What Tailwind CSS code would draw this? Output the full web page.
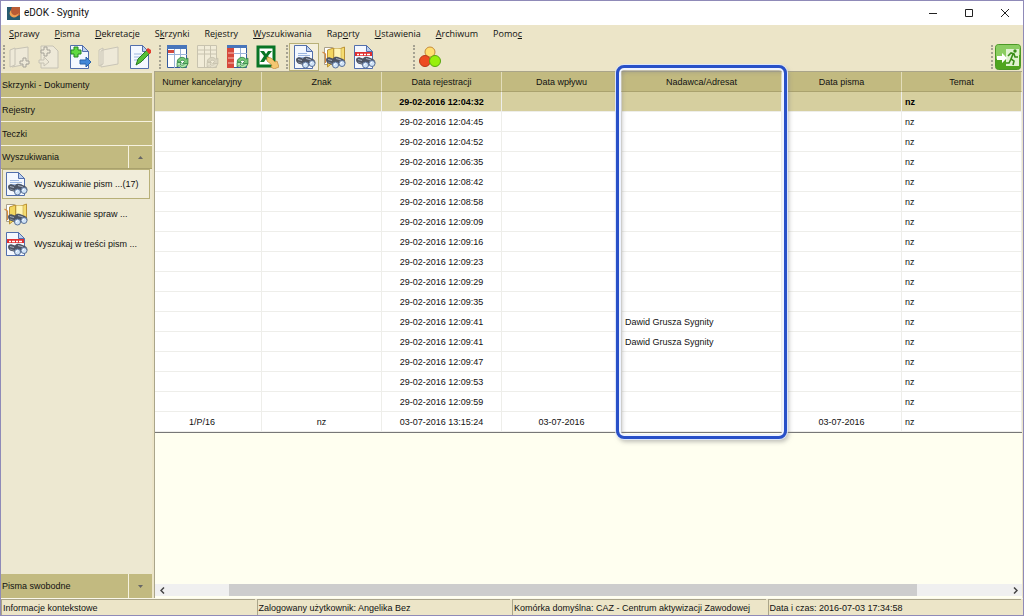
<!DOCTYPE html>
<html lang="pl">
<head>
<meta charset="utf-8">
<title>eDOK - Sygnity</title>
<script src="https://cdn.jsdelivr.net/npm/@tailwindcss/browser@4"></script>
</head>
<body class="flex h-screen flex-col overflow-hidden border border-[#8f8ab8] bg-[#ece5c8] font-['Liberation_Sans',sans-serif] text-[9px] leading-3 whitespace-nowrap text-[#111]">

<svg class="hidden" xmlns="http://www.w3.org/2000/svg">
  <defs>
    <symbol id="page" viewBox="0 0 24 24"><path d="M2.500.5h12l6 6v17h-18z" fill="#f4f8ff" stroke="#526fac"/><path d="M14.500.5v6h6z" fill="#bdd0ee" stroke="#526fac"/></symbol>
    <symbol id="bino" viewBox="0 0 24 24"><path d="M4 15c0-2 2-3 4-2.500l3 1c1-2 3-2 5-1.500l5 2c2 1 3 3 2 5l-9 2-6-2c-2 0-4-2-4-4z" fill="#4c5362"/><path d="M6 14.500l4 1M14 13.500l5 1.500" stroke="#a3acbb" stroke-width="1.200"/><path d="M6 17l4 1.500" stroke="#7d8796"/><circle cx="13.500" cy="20" r="3" fill="#cfe2f7" stroke="#5a7197"/><circle cx="20" cy="18.500" r="3" fill="#cfe2f7" stroke="#5a7197"/><path d="M12 20l1.500-1.500M18.500 18.500L20 17" stroke="#fff"/></symbol>
    <symbol id="doc-find" viewBox="0 0 24 24"><use href="#page"/><path d="M6 8.500h9M6 10.500h12M6 12.500h12" stroke="#9cb6df"/><use href="#bino"/></symbol>
    <symbol id="case-find" viewBox="0 0 24 24"><path d="M2.500 2.500h8v17h-8z" fill="#fff" stroke="#a9a08c"/><path d="M.5 7l3 2v9" fill="none" stroke="#d68a3d" stroke-width="1.200"/><path d="M5.500 5l6-2v14l-6 5z" fill="#f3d65f" stroke="#bc9334"/><path d="M11.500 3.500l3 1.500 8-3v16h-11z" fill="#f5dc70" stroke="#bc9334"/><path d="M12 3.500h7v10h-7z" fill="#fff5b7" stroke="#c4a54a" stroke-width=".6"/><use href="#bino"/></symbol>
    <symbol id="pdf-find" viewBox="0 0 24 24"><use href="#page"/><path d="M3 7h17v4H3z" fill="#e03030"/><path d="M5 9.500h2m1 0h3m1 0h2m1 0h3" stroke="#fff" stroke-width="1.500"/><use href="#bino"/></symbol>
    <symbol id="refresh" viewBox="0 0 12 12"><path d="M1 5c1-4 6-5 8-2l2-1v5H6l2-2C6 3 4 4 4 6z" fill="#78c878" stroke="#2f8745" stroke-width=".8"/><path d="M11 7c-1 4-6 5-8 2l-2 1V6h4L4 8c2 1 4 0 4-1z" fill="#b3e8ad" stroke="#2f8745" stroke-width=".8"/></symbol>
  </defs>
</svg>

<header class="flex h-6 shrink-0 items-center justify-between bg-white pl-1.5">
  <div class="flex items-center gap-1">
    <svg class="size-[13px]" viewBox="0 0 13 13"><rect width="13" height="13" fill="#b95b35"/><path d="M0 0h5c-2 3-1 7 2 9 2 1 4 0 6-1v5H0z" fill="#285c70"/><path d="M4 3c0 5 4 7 8 3-1 5-7 6-9 2-1-2 0-4 1-5z" fill="#f1a052"/></svg>
    <h1 class="font-['Roboto',sans-serif] text-[10px]">eDOK - Sygnity</h1>
  </div>
  <div class="flex">
    <button aria-label="Minimalizuj" class="flex h-6 w-9 items-center justify-center"><svg class="size-[10px]" viewBox="0 0 10 10"><path d="M1 5.500h8" stroke="#222"/></svg></button>
    <button aria-label="Maksymalizuj" class="flex h-6 w-9 items-center justify-center"><svg class="size-[10px]" viewBox="0 0 10 10"><path d="M1.500 1.500h7v7h-7z" fill="none" stroke="#222"/></svg></button>
    <button aria-label="Zamknij" class="flex h-6 w-9 items-center justify-center"><svg class="size-[10px]" viewBox="0 0 10 10"><path d="M1 1l8 8M9 1l-8 8" stroke="#222"/></svg></button>
  </div>
</header>

<nav class="flex h-[18px] shrink-0 items-center gap-[15px] px-2 font-['Open_Sans',sans-serif]">
  <button><u>S</u>prawy</button><button><u>P</u>isma</button><button><u>D</u>ekretacje</button><button>S<u>k</u>rzynki</button><button>Re<u>j</u>estry</button><button><u>W</u>yszukiwania</button><button>Rap<u>o</u>rty</button><button><u>U</u>stawienia</button><button><u>A</u>rchiwum</button><button>Pomo<u>c</u></button>
</nav>

<div class="flex h-7 shrink-0 items-center justify-between">
  <div class="flex items-center">
    <span class="ml-0.5 h-6 w-0 border-l-2 border-dotted border-[#a5a292]"></span>
    <button aria-label="Nowa sprawa" disabled class="flex h-7 w-[30px] items-center justify-center"><svg class="size-6" viewBox="0 0 24 24" fill="#eee9d8" stroke="#c6c2b4"><path d="M2 5l5-2v17l-5 2zM7 4l13-2v17L4 22"/><path d="M15 13h3v3h3v3h-3v3h-3v-3h-3v-3h3z" stroke="#a5a298"/></svg></button>
    <button aria-label="Nowe pismo" disabled class="flex h-7 w-[30px] items-center justify-center"><svg class="size-6" viewBox="0 0 24 24" fill="#eee9d8" stroke="#c6c2b4"><path d="M3 1h12l5 5v17H3z"/><path d="M6 2h3v3h3v3H9v3H6V8H3V5h3z" stroke="#a5a298"/><path d="M1 15h5v-3l5 5-5 4v-3H1z"/></svg></button>
    <button aria-label="Dodaj pismo" class="flex h-7 w-[30px] items-center justify-center"><svg class="size-6" viewBox="0 0 24 24"><use href="#page"/><path d="M6 2h4v3h3v4h-3v3H6V9H3V5h3z" fill="#60da42" stroke="#278424"/><path d="M12 15h6v-3l5 5-5 5v-3h-6z" fill="#4288d8" stroke="#2862a9"/></svg></button>
    <button aria-label="Teczka" disabled class="flex h-7 w-[30px] items-center justify-center"><svg class="size-6" viewBox="0 0 24 24" fill="#eee9d8" stroke="#c9c5b7"><path d="M1 5l4-2v16l-4 2zM5 5l15-3v17L3 22V6z"/></svg></button>
    <button aria-label="Edytuj" class="flex h-7 w-[30px] items-center justify-center"><svg class="size-6" viewBox="0 0 24 24"><use href="#page"/><path d="M6 9h8M6 12h9M6 15h10" stroke="#9cb6df"/><path d="M8 20l2-6 9-9 3 3-9 9z" fill="#55bf37" stroke="#287d25"/><path d="M18 5l2-2 3 2v3l-2 1z" fill="#e33c2e"/></svg></button>
    <span class="ml-1 h-6 w-0 border-l-2 border-dotted border-[#a5a292]"></span>
    <button aria-label="Odśwież listę" class="ml-px flex h-7 w-[30px] items-center justify-center"><svg class="size-6" viewBox="0 0 24 24"><path d="M2.500.5h19v22h-19z" fill="#fff" stroke="#345b9d"/><path d="M2 0h20v4H2z" fill="#4976bb"/><path d="M9.500 4v19M15.500 4v19M3 9.500h19" stroke="#9ab3d8"/><path d="M3 5h6v3H3z" fill="#d34b3f"/><use href="#refresh" x="11" y="11" width="13" height="13"/></svg></button>
    <button aria-label="Odśwież" disabled class="flex h-7 w-[30px] items-center justify-center"><svg class="size-6 opacity-30 grayscale" viewBox="0 0 24 24"><path d="M2.500.5h19v22h-19zM9.500 1v21M15.500 1v21M3 5h18M3 9h18" fill="#fff" stroke="#777"/><use href="#refresh" x="11" y="11" width="13" height="13"/></svg></button>
    <button aria-label="Odśwież rejestr" class="flex h-7 w-[30px] items-center justify-center"><svg class="size-6" viewBox="0 0 24 24"><path d="M2.500.5h19v22h-19z" fill="#fff" stroke="#345b9d"/><path d="M2 0h20v3H2z" fill="#4976bb"/><path d="M2 3h7v20H2z" fill="#d6493c"/><path d="M3 8h6M3 13h6M3 18h6" stroke="#f4c0b5"/><path d="M9 8.500h13M15.500 3v19" stroke="#9ab3d8"/><use href="#refresh" x="11" y="11" width="13" height="13"/></svg></button>
    <button aria-label="Eksport do Excela" class="flex h-7 w-[30px] items-center justify-center"><svg class="size-6" viewBox="0 0 24 24"><path d="M3 2h16v19H3z" fill="#fff" stroke="#087526" stroke-width="3"/><path d="M5 6h4l2 3 2-3h4l-4 5 4 6h-4l-2-3-2 3H5l4-6z" fill="#087526"/><path d="M12 12l4 1 4 4 2-1 2 6-5 2-3-2 1-2-5-4z" fill="#f4c771" stroke="#c4883c" stroke-width=".7"/></svg></button>
    <span class="ml-1 h-6 w-0 border-l-2 border-dotted border-[#a5a292]"></span>
    <button aria-label="Wyszukiwanie pism" class="ml-px flex h-7 w-[30px] items-center justify-center border border-[#b8b078] bg-[#f4efdc]"><svg class="size-6"><use href="#doc-find"/></svg></button>
    <button aria-label="Wyszukiwanie spraw" class="flex h-7 w-[30px] items-center justify-center"><svg class="size-6"><use href="#case-find"/></svg></button>
    <button aria-label="Wyszukaj w treści pism" class="flex h-7 w-[30px] items-center justify-center"><svg class="size-6"><use href="#pdf-find"/></svg></button>
    <span class="ml-[34px] h-6 w-0 border-l-2 border-dotted border-[#a5a292]"></span>
    <button aria-label="Kategorie" class="flex h-7 w-[30px] items-center justify-center"><svg class="size-6" viewBox="0 0 24 24"><circle cx="12" cy="7" r="5" fill="#ffdf70" stroke="#c58a3a"/><circle cx="7" cy="16" r="5.500" fill="#ed4b22" stroke="#b63918"/><circle cx="17" cy="16" r="5.500" fill="#98f00d" stroke="#58a510"/></svg></button>
  </div>
  <div class="flex items-center gap-0.5 pr-0.5">
    <span class="h-6 w-0 border-l-2 border-dotted border-[#a5a292]"></span>
    <button aria-label="Wyjście"><svg class="size-[26px]" viewBox="0 0 26 26"><rect x=".5" y=".5" width="25" height="25" rx="3" fill="#4fa51f" stroke="#4b9826"/><path d="M1 3q0-2 2-2h20q2 0 2 2v8q-12 0-24 4z" fill="#8bcd62"/><path d="M11 5h13v17H11z" fill="#e0f2d0"/><path d="M2 12h5V9l5 5-5 5v-3H2z" fill="#fff"/><circle cx="20" cy="7" r="1.700" fill="#398e19"/><path d="M13 12l3-3 3 1 1 3h3M18 10l-2 5 3 2-1 4M16 15l-2 4h-3" fill="none" stroke="#398e19" stroke-width="1.600"/></svg></button>
  </div>
</div>

<main class="flex min-h-0 flex-1">
  <aside class="flex w-[151px] shrink-0 flex-col bg-[#ede8d1] pt-0.5">
    <button class="h-[25px] border-b border-[#f6f2df] bg-[#c2ba80] px-px text-left">Skrzynki - Dokumenty</button>
    <button class="h-6 border-b border-[#f6f2df] bg-[#c2ba80] px-px text-left">Rejestry</button>
    <button class="h-6 border-b border-[#f6f2df] bg-[#c2ba80] px-px text-left">Teczki</button>
    <button class="flex h-[23px] items-center border-b border-[#a9a16d] bg-[#c2ba80] pl-px text-left"><span class="flex-1">Wyszukiwania</span><span class="flex h-full w-6 items-center justify-center border-l border-[#f6f2df]"><svg class="h-[3px] w-[5px]" viewBox="0 0 5 3"><path d="M0 3h5L2.500 0z" fill="#666"/></svg></span></button>
    <button class="mr-0.5 ml-px flex h-[30px] items-center gap-1.5 border border-[#b8b078] bg-[#f1edda] pl-px"><svg class="size-6"><use href="#doc-find"/></svg>Wyszukiwanie pism ...(17)</button>
    <button class="flex h-[30px] items-center gap-1.5 pl-[3px]"><svg class="size-6"><use href="#case-find"/></svg>Wyszukiwanie spraw ...</button>
    <button class="flex h-[30px] items-center gap-1.5 pl-[3px]"><svg class="size-6"><use href="#pdf-find"/></svg>Wyszukaj w treści pism ...</button>
    <button class="mt-auto flex h-6 items-center bg-[#c2ba80] pl-px text-left"><span class="flex-1">Pisma swobodne</span><span class="flex h-full w-6 items-center justify-center border-l border-[#f6f2df]"><svg class="h-[3px] w-[5px]" viewBox="0 0 5 3"><path d="M0 0h5L2.500 3z" fill="#666"/></svg></span></button>
  </aside>

  <section class="relative mr-px ml-0.5 flex min-w-0 flex-1 flex-col border-t border-l border-[#aaa58a] bg-[#fffff0]">
    <table class="w-full table-fixed border-separate border-spacing-0 border-b border-[#777] bg-white text-center">
      <colgroup><col class="w-[107px]"><col><col><col><col class="w-[160px]"><col><col></colgroup>
      <thead><tr class="h-5 bg-[#c2ba80] [&>th]:border-r [&>th]:border-b [&>th]:border-r-[#e3ddba] [&>th]:border-b-[#aaa26e] [&>th]:p-0 [&>th]:font-normal [&>th:first-child]:pr-3"><th>Numer kancelaryjny</th><th>Znak</th><th>Data rejestracji</th><th>Data wpływu</th><th>Nadawca/Adresat</th><th>Data pisma</th><th>Temat</th></tr></thead>
      <tbody id="rows" class="[&_td]:border-r [&_td]:border-b [&_td]:border-[#eeeeea] [&_td]:p-0 [&_td:first-child]:pr-3 [&_td:nth-child(5)]:pl-[3px] [&_td:nth-child(5)]:text-left [&_td:nth-child(7)]:pl-[3px] [&_td:nth-child(7)]:text-left"></tbody>
    </table>
    <div class="pointer-events-none absolute -top-[7px] left-[461px] h-[374px] w-[171px] rounded-lg border-3 border-[#2850c8] shadow-[0_0_0_1px_#dce6fa,inset_0_0_0_2px_#eef3ff,inset_3px_4px_4px_#8888,2px_3px_4px_#8888]"></div>
    <div class="mt-auto mb-0.5 flex h-3 items-center bg-[#f0f0f0]">
      <button aria-label="Przewiń w lewo" class="flex w-[14px] justify-center"><svg class="h-[7px] w-[5px]" viewBox="0 0 5 7"><path d="M4 .5l-3 3 3 3" fill="none" stroke="#444" stroke-width="1.500"/></svg></button>
      <div class="flex flex-1"><span class="w-[60px] shrink-0"></span><span class="h-3 w-[82%] bg-[#cdcdcd]"></span></div>
      <button aria-label="Przewiń w prawo" class="flex w-[14px] justify-center"><svg class="h-[7px] w-[5px]" viewBox="0 0 5 7"><path d="M1 .5l3 3-3 3" fill="none" stroke="#444" stroke-width="1.500"/></svg></button>
    </div>
  </section>
</main>

<footer class="grid h-[17px] shrink-0 grid-cols-4 gap-0.5 border-t border-[#faf8ea] pr-0.5 [&>span]:border-t [&>span]:border-l [&>span]:border-[#aaa58a] [&>span]:pt-0.5 [&>span]:pl-px">
  <span>Informacje kontekstowe</span><span>Zalogowany użytkownik: Angelika Bez</span><span>Komórka domyślna: CAZ - Centrum aktywizacji Zawodowej</span><span>Data i czas: 2016-07-03 17:34:58</span>
</footer>

<script>
const times = ['04:32','04:45','04:52','06:35','08:42','08:58','09:09','09:16','09:23','09:29','09:35','09:41','09:41','09:47','09:53','09:59'];
const data = times.map((t, i) => ['', '', '29-02-2016 12:' + t, '', i === 11 || i === 12 ? 'Dawid Grusza Sygnity' : '', '', 'nz']);
data.push(['1/P/16', 'nz', '03-07-2016 13:15:24', '03-07-2016', '', '03-07-2016', 'nz']);
document.getElementById('rows').innerHTML = data.map((r, i) =>
  '<tr class="' + (i ? 'h-5' : 'h-5 bg-[#d6cf9f] font-bold text-black') + '">' +
  r.map(c => '<td>' + c + '</td>').join('') + '</tr>').join('');
</script>
</body>
</html>
